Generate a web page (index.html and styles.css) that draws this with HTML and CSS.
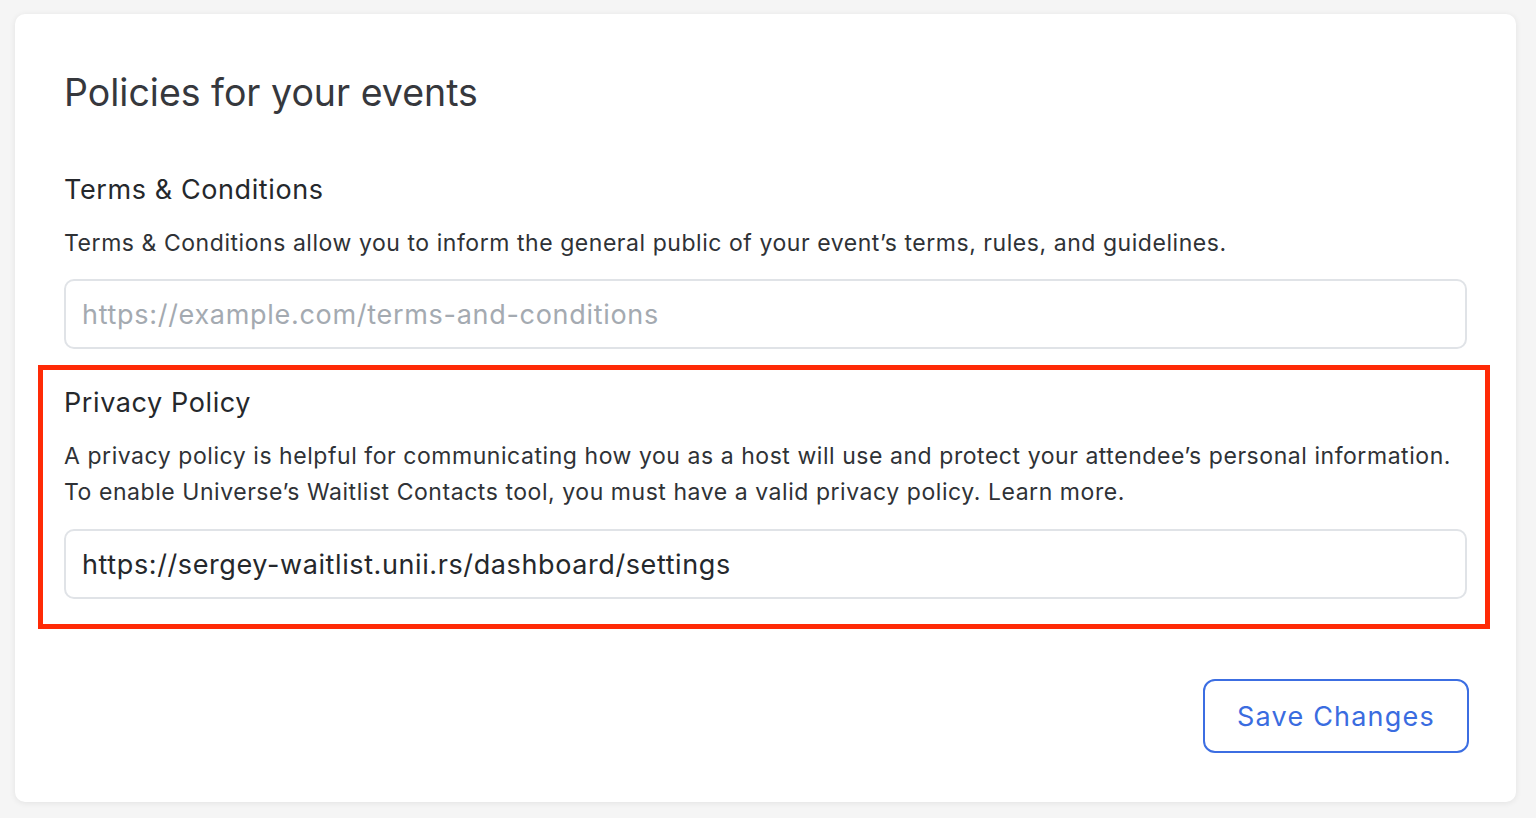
FILE: index.html
```html
<!DOCTYPE html>
<html lang="en">
<head>
<meta charset="utf-8">
<title>Policies for your events</title>
<link rel="stylesheet" href="styles.css">
</head>
<body>
<main class="card">
  <h1 class="card-title">Policies for your events</h1>

  <section class="policy">
    <h2 class="policy-title">Terms &amp; Conditions</h2>
    <p class="policy-desc">Terms &amp; Conditions allow you to inform the general public of your event’s terms, rules, and guidelines.</p>
    <input class="policy-input" type="text" placeholder="https://example.com/terms-and-conditions">
  </section>

  <section class="policy policy-highlight">
    <h2 class="policy-title">Privacy Policy</h2>
    <p class="policy-desc">A privacy policy is helpful for communicating how you as a host will use and protect your attendee’s personal information.<br>To enable Universe’s Waitlist Contacts tool, you must have a valid privacy policy. Learn more.</p>
    <input class="policy-input" type="text" value="https://sergey-waitlist.unii.rs/dashboard/settings">
  </section>

  <div class="actions">
    <button class="btn-save" type="button">Save Changes</button>
  </div>
</main>
</body>
</html>
```

FILE: styles.css
```css
* { box-sizing: border-box; }

html, body {
  margin: 0;
  padding: 0;
}

body {
  background: #f5f5f5;
  padding: 14px 20px 16px 15px;
  font-family: "Inter", "Lato", sans-serif;
  color: #2a2d31;
}

.card {
  width: 1501px;
  background: #ffffff;
  border-radius: 10px;
  box-shadow: 0 1px 6px rgba(0, 0, 0, 0.08);
  padding: 55px 49px 49px 49px;
  display: flex;
  flex-direction: column;
}

.card-title {
  margin: 0;
  font-size: 37.5px;
  line-height: 48px;
  font-weight: 400;
  color: #36383d;
}

.policy {
  display: flex;
  flex-direction: column;
}

.policy:first-of-type {
  margin-top: 55px;
}

.policy-title {
  margin: 0;
  font-size: 27px;
  line-height: 36px;
  font-weight: 400;
  letter-spacing: 0.6px;
  color: #25282c;
}

.policy-desc {
  margin: 17px 0 0 0;
  font-size: 23px;
  line-height: 36px;
  letter-spacing: 0.55px;
  color: #2f3236;
}

.policy-input {
  margin-top: 18px;
  height: 70px;
  width: 100%;
  border: 2px solid #e0e3e7;
  border-radius: 10px;
  padding: 0 16px;
  font-family: inherit;
  font-size: 27px;
  letter-spacing: 0.6px;
  color: #25282c;
  background: #ffffff;
  outline: none;
}

.policy-input::placeholder {
  color: #a4aab1;
  letter-spacing: 0.7px;
}

.policy-highlight {
  margin: 16px -23px 0 -26px;
  border: 5px solid #ff2a06;
  padding: 15px 18px 25px 21px;
}

.policy-highlight .policy-input {
  margin-top: 19px;
}

.actions {
  display: flex;
  justify-content: flex-end;
  margin-top: 50px;
}

.btn-save {
  width: 266px;
  height: 74px;
  border: 2px solid #3c6ee2;
  border-radius: 12px;
  background: #ffffff;
  color: #3a6ce0;
  font-family: inherit;
  font-size: 27px;
  letter-spacing: 1.2px;
  cursor: pointer;
  margin-right: -2px;
}
```
